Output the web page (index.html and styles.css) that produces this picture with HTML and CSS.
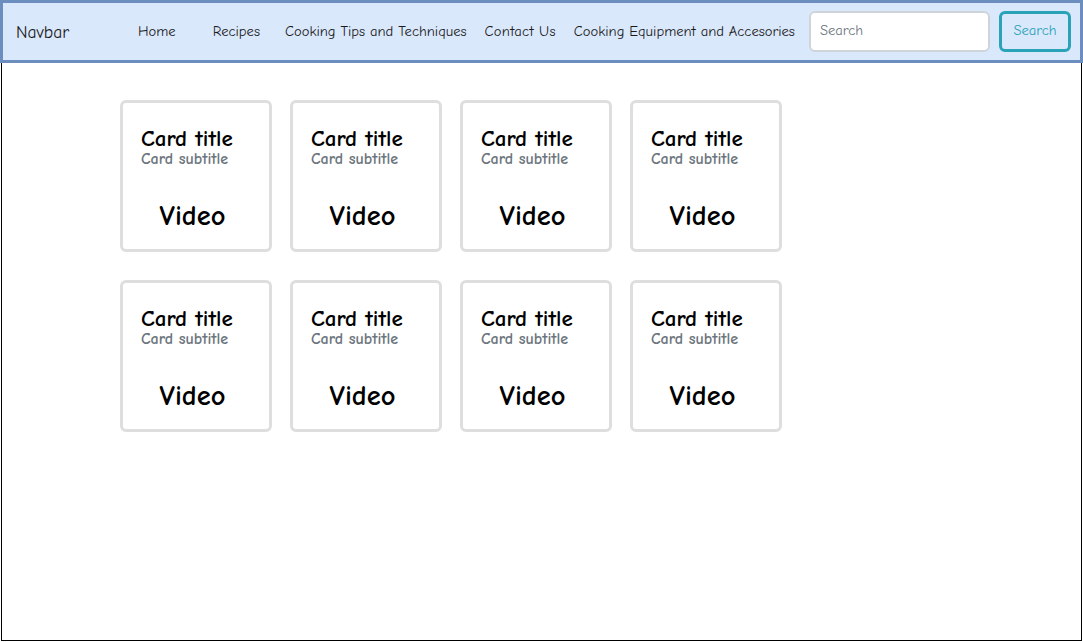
FILE: index.html
```html
<!DOCTYPE html>
<html>
<head>
<meta charset="utf-8">
<link rel="stylesheet" href="styles.css">
</head>
<body>
<div class="page">
  <nav class="navbar">
    <span class="brand">Navbar</span>
    <a class="nav-link home">Home</a>
    <a class="nav-link recipes">Recipes</a>
    <a class="nav-link tips">Cooking Tips and Techniques</a>
    <a class="nav-link contact">Contact Us</a>
    <a class="nav-link equip">Cooking Equipment and Accesories</a>
    <div class="search-input">Search</div>
    <div class="search-btn">Search</div>
  </nav>
  <main class="content">
    <div class="grid">
      <div class="card"><div class="title">Card title</div><div class="subtitle">Card subtitle</div><div class="video">Video</div></div>
      <div class="card"><div class="title">Card title</div><div class="subtitle">Card subtitle</div><div class="video">Video</div></div>
      <div class="card"><div class="title">Card title</div><div class="subtitle">Card subtitle</div><div class="video">Video</div></div>
      <div class="card"><div class="title">Card title</div><div class="subtitle">Card subtitle</div><div class="video">Video</div></div>
      <div class="card"><div class="title">Card title</div><div class="subtitle">Card subtitle</div><div class="video">Video</div></div>
      <div class="card"><div class="title">Card title</div><div class="subtitle">Card subtitle</div><div class="video">Video</div></div>
      <div class="card"><div class="title">Card title</div><div class="subtitle">Card subtitle</div><div class="video">Video</div></div>
      <div class="card"><div class="title">Card title</div><div class="subtitle">Card subtitle</div><div class="video">Video</div></div>
    </div>
  </main>
</div>
</body>
</html>
```
FILE: styles.css
```css
* { box-sizing: border-box; }
html, body { margin: 0; padding: 0; background: #ffffff; }
body {
  font-family: "Comic Sans MS", "Comic Neue", "DejaVu Sans", sans-serif;
  width: 1083px;
  height: 642px;
  overflow: hidden;
}
.page {
  width: 1083px;
  height: 642px;
  display: flex;
  flex-direction: column;
}
.navbar {
  height: 63px;
  flex: none;
  background: #dae8fc;
  border: 3px solid #6c8ebf;
  display: flex;
  align-items: center;
  color: #1a1a1a;
  font-size: 14.6px;
  white-space: nowrap;
}
.brand { margin-left: 13px; font-size: 17.5px; width: 122px; flex: none; }
.nav-link { color: #1a1a1a; flex: none; }
.recipes { margin-left: 37px; }
.tips { margin-left: 25px; }
.contact { margin-left: 18px; letter-spacing: 0.3px; }
.equip { margin-left: 18px; }
.search-input {
  flex: none;
  margin-left: 14px;
  width: 181px;
  height: 41px;
  background: #ffffff;
  border: 2px solid #cfd4da;
  border-radius: 6px;
  color: #6c757d;
  padding-left: 9px;
  padding-bottom: 2px;
  display: flex;
  align-items: center;
  font-size: 14.6px;
}
.search-btn {
  flex: none;
  margin-left: 9px;
  width: 72px;
  height: 41px;
  border: 3px solid #2aa3b8;
  border-radius: 6px;
  color: #2aa3b8;
  display: flex;
  align-items: center;
  justify-content: center;
  padding-bottom: 2px;
  font-size: 14.6px;
}
.content {
  flex: 1;
  margin: 0 1px 1px 1px;
  border: 1px solid #000000;
  border-top: none;
  padding: 37px 0 0 118px;
}
.grid {
  display: grid;
  grid-template-columns: repeat(4, 152px);
  grid-auto-rows: 152px;
  column-gap: 18px;
  row-gap: 28px;
}
.card {
  border: 3px solid #dedede;
  border-radius: 6px;
  padding: 24px 0 0 18px;
  display: flex;
  flex-direction: column;
}
.title {
  font-size: 23px;
  font-weight: bold;
  color: #000000;
  line-height: 24px;
}
.subtitle {
  font-size: 16px;
  font-weight: bold;
  color: #6c757d;
  line-height: 16px;
}
.video {
  margin-top: 33px;
  margin-left: -18px;
  margin-right: 7px;
  text-align: center;
  font-size: 28.5px;
  font-weight: bold;
  color: #000000;
  line-height: 32px;
}
```
